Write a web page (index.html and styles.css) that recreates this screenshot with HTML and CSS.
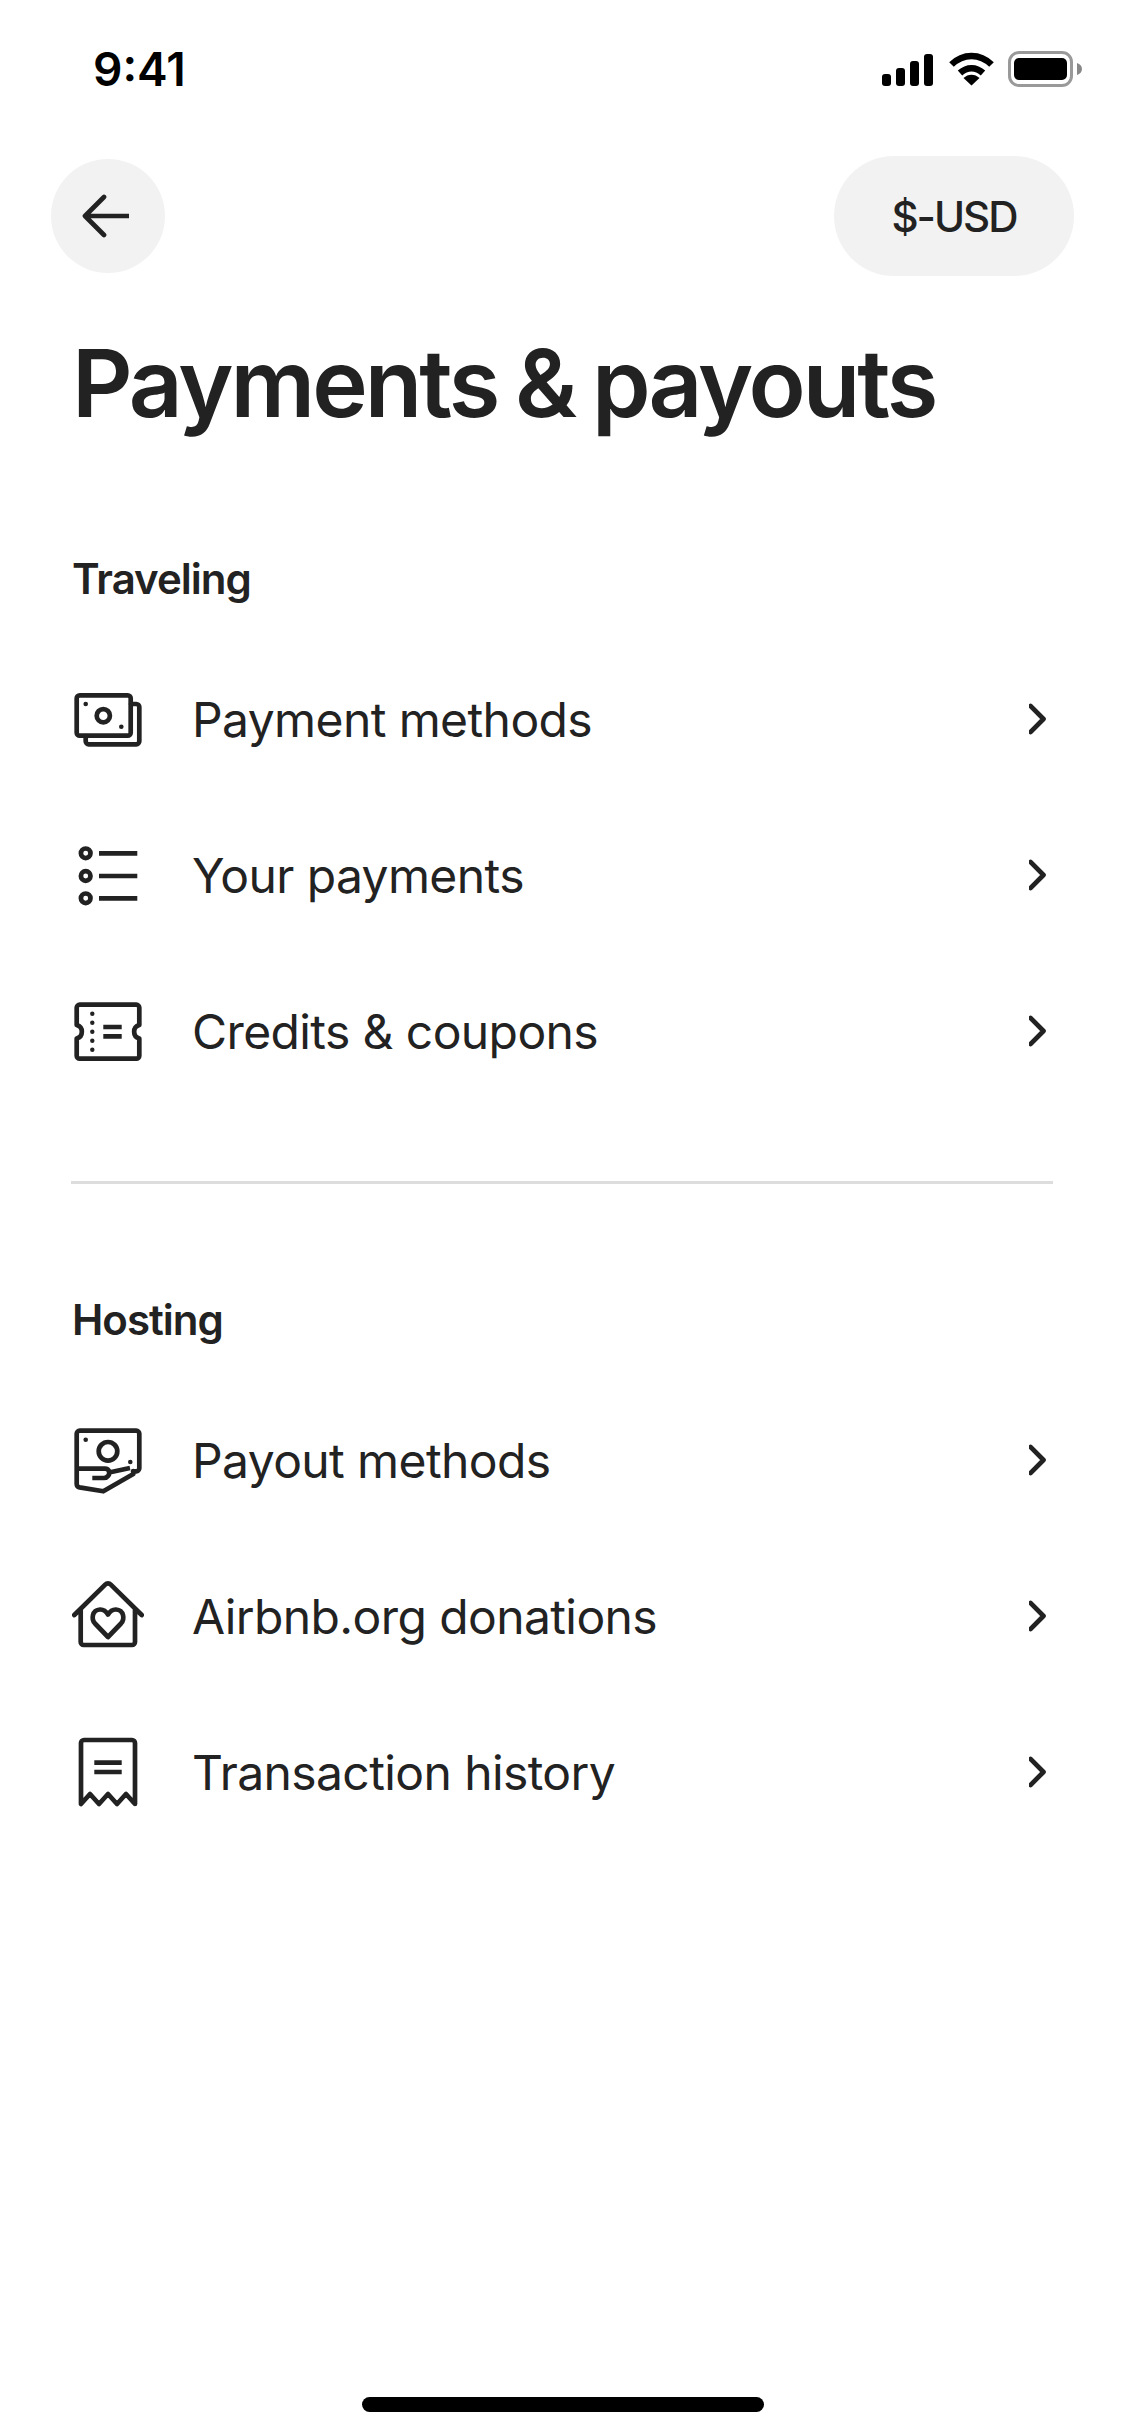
FILE: index.html
```html
<!DOCTYPE html>
<html lang="en">
<head>
    <meta charset="UTF-8">
    <meta name="viewport" content="width=device-width, initial-scale=1.0">
    <title>Payments &amp; payouts</title>
    <link rel="stylesheet" href="styles.css">
</head>
<body>
    <div class="page">
        <!-- Status bar -->
        <div class="status-bar">
            <span class="time">9:41</span>
            <div class="status-icons">
                <svg class="signal" width="55" height="33" viewBox="0 0 55 33"><rect x="2" y="21" width="9" height="12" rx="3"/><rect x="16" y="15" width="9" height="18" rx="3"/><rect x="30" y="8" width="9" height="25" rx="3"/><rect x="44" y="1" width="9" height="32" rx="3"/></svg>
                <svg class="wifi" width="45" height="34" viewBox="0 0 45 34"><path d="M2.5 12.5C14 1 31 1 42.5 12.5" class="wifi-arc"/><path d="M11 21C18 14.5 27 14.5 34 21" class="wifi-arc"/><path d="M22.5 33.5L14.5 26C19 21.5 26 21.5 30.5 26Z"/></svg>
                <svg class="battery" width="74" height="36" viewBox="0 0 74 36"><rect x="1.5" y="1.5" width="62" height="33" rx="9.5" fill="none" stroke="#999" stroke-width="3"/><rect x="6" y="7" width="53" height="22" rx="5"/><path d="M69 12c3 1 5 3 5 6s-2 5-5 6z" fill="#888"/></svg>
            </div>
        </div>

        <!-- Top buttons -->
        <div class="top-bar">
            <button class="back-button">
                <svg width="48" height="44" viewBox="0 0 48 44"><path d="M23 3L4 22L23 41M5 22H47" class="line"/></svg>
            </button>
            <button class="currency-button">$-USD</button>
        </div>

        <h1 class="title">Payments &amp; payouts</h1>

        <!-- Traveling -->
        <div class="section">
            <h3 class="section-title">Traveling</h3>
            <div class="row">
                <svg class="row-icon" viewBox="0 0 72 72"><rect x="4.7" y="12.3" width="54" height="40.4" rx="3" class="line"/><path d="M59 21h5.3a3 3 0 0 1 3 3v34.3a3 3 0 0 1-3 3H16.7a3 3 0 0 1-3-3V53" class="line"/><circle cx="31.3" cy="32.7" r="6.6" class="line"/><circle cx="13.7" cy="21" r="2.3"/><circle cx="49.3" cy="43.7" r="2.3"/></svg>
                <span class="row-label">Payment methods</span>
                <svg class="chevron" viewBox="0 0 24 36"><path d="M1.5 5L14.5 18L1.5 31" class="line"/></svg>
            </div>
            <div class="row">
                <svg class="row-icon" viewBox="0 0 72 72"><circle cx="13.7" cy="14.3" r="4.8" class="line"/><circle cx="13.7" cy="37" r="4.8" class="line"/><circle cx="13.7" cy="59.3" r="4.8" class="line"/><path d="M27 14.3H65.3M27 37H65.3M27 59.3H65.3" class="line butt"/></svg>
                <span class="row-label">Your payments</span>
                <svg class="chevron" viewBox="0 0 24 36"><path d="M1.5 5L14.5 18L1.5 31" class="line"/></svg>
            </div>
            <div class="row">
                <svg class="row-icon" viewBox="0 0 72 72"><path d="M7.7 9.7H64.3a3 3 0 0 1 3 3V30a7 7 0 0 0 0 13.5V60.7a3 3 0 0 1-3 3H7.7a3 3 0 0 1-3-3V43.5a7 7 0 0 0 0-13.5V12.7a3 3 0 0 1 3-3Z" class="line"/><circle cx="20.3" cy="18.7" r="2.2"/><circle cx="20.3" cy="27.7" r="2.2"/><circle cx="20.3" cy="36.7" r="2.2"/><circle cx="20.3" cy="45.7" r="2.2"/><circle cx="20.3" cy="54.7" r="2.2"/><path d="M31.3 32H49.7M31.3 41.3H49.7" class="line butt"/></svg>
                <span class="row-label">Credits &amp; coupons</span>
                <svg class="chevron" viewBox="0 0 24 36"><path d="M1.5 5L14.5 18L1.5 31" class="line"/></svg>
            </div>
        </div>

        <hr class="divider">

        <!-- Hosting -->
        <div class="section">
            <h3 class="section-title">Hosting</h3>
            <div class="row">
                <svg class="row-icon" viewBox="0 0 72 72"><path d="M61 47.3H64.3a3 3 0 0 0 3-3V9.7a3 3 0 0 0-3-3H7.7a3 3 0 0 0-3 3V60a3.5 3.5 0 0 0 2.8 3.4L31.3 67.3L61.3 50V47" class="line"/><path d="M5 44.7H33C37 44.7 38.5 49 36 52C35 53.3 33.5 54 32 54H20.3M37 48.5L58 44" class="line butt"/><circle cx="36" cy="27.3" r="9.3" class="line"/><circle cx="13.7" cy="15.7" r="2.3"/><circle cx="58.3" cy="38" r="2.3"/></svg>
                <span class="row-label">Payout methods</span>
                <svg class="chevron" viewBox="0 0 24 36"><path d="M1.5 5L14.5 18L1.5 31" class="line"/></svg>
            </div>
            <div class="row">
                <svg class="row-icon" viewBox="0 0 72 72"><path d="M2.3 35L33.2 4.6a4 4 0 0 1 5.6 0L69.7 35M8.7 29.7V62a3 3 0 0 0 3 3H60a3 3 0 0 0 3-3V29.7" class="line"/><path d="M36 57L23 43.5C19 39 20 30 28 29.5C32 29.3 34.5 32 36 34.5C37.5 32 40 29.3 44 29.5C52 30 53 39 49 43.5Z" class="line"/></svg>
                <span class="row-label">Airbnb.org donations</span>
                <svg class="chevron" viewBox="0 0 24 36"><path d="M1.5 5L14.5 18L1.5 31" class="line"/></svg>
            </div>
            <div class="row">
                <svg class="row-icon" viewBox="0 0 72 72"><path d="M9 68V7a3 3 0 0 1 3-3H60a3 3 0 0 1 3 3V68L54 58L45 68L36 58L27 68L18 58Z" class="line"/><path d="M22.3 26.7H49.7M22.3 36H49.7" class="line butt"/></svg>
                <span class="row-label">Transaction history</span>
                <svg class="chevron" viewBox="0 0 24 36"><path d="M1.5 5L14.5 18L1.5 31" class="line"/></svg>
            </div>
        </div>

        <div class="home-indicator"></div>
    </div>
</body>
</html>
```

FILE: styles.css
```css
/* Basic Reset */
body, h1, h3, hr, button {
    margin: 0;
    padding: 0;
    font-family: 'Inter', 'Liberation Sans', sans-serif;
}

body {
    background: #fff;
    color: #222;
}

.page {
    width: 1125px;
    height: 2436px;
    display: flex;
    flex-direction: column;
    overflow: hidden;
}

/* Status bar */
.status-bar {
    height: 52px;
    margin-top: 43px;
    padding: 0 43px 0 93px;
    display: flex;
    justify-content: space-between;
    align-items: center;
}

.time {
    font-size: 46px;
    font-weight: 600;
    color: #000;
}

.status-icons {
    display: flex;
    align-items: center;
    gap: 14px;
}

.status-icons svg {
    fill: #000;
    display: block;
}

.wifi-arc {
    fill: none;
    stroke: #000;
    stroke-width: 6.5;
}

/* Top buttons */
.top-bar {
    margin-top: 61px;
    padding: 0 51px;
    display: flex;
    justify-content: space-between;
    align-items: center;
}

.back-button {
    width: 114px;
    height: 114px;
    padding-right: 6px;
    border: none;
    border-radius: 50%;
    background: #f2f2f2;
    display: flex;
    justify-content: center;
    align-items: center;
}

.currency-button {
    width: 240px;
    height: 120px;
    border: none;
    border-radius: 60px;
    background: #f2f2f2;
    color: #222;
    font-size: 42px;
    font-weight: 500;
    letter-spacing: -2px;
}

.title {
    margin-top: 51px;
    margin-bottom: 4px;
    padding-left: 72px;
    font-size: 94px;
    line-height: 112px;
    font-weight: 600;
    letter-spacing: -3px;
    word-spacing: -3px;
}

/* Sections */
.section {
    padding: 0 72px;
}

.section-title {
    margin-top: 110px;
    margin-bottom: 36px;
    font-size: 42px;
    line-height: 52px;
    font-weight: 600;
    letter-spacing: -1px;
}

.row {
    height: 156px;
    display: flex;
    align-items: center;
}

.row-icon {
    width: 72px;
    height: 72px;
    fill: #222;
    flex-shrink: 0;
}

.row-label {
    margin-left: 48px;
    flex: 1;
    font-size: 48px;
    font-weight: 400;
    letter-spacing: -0.6px;
}

.chevron {
    width: 24px;
    height: 36px;
    flex-shrink: 0;
}

.line {
    fill: none;
    stroke: #222;
    stroke-width: 4.7;
    stroke-linecap: round;
    stroke-linejoin: round;
}

.butt {
    stroke-linecap: butt;
}

.divider {
    margin: 72px 72px 0 71px;
    border: none;
    border-top: 3px solid #ddd;
}

.home-indicator {
    width: 402px;
    height: 15px;
    margin: auto auto 24px;
    border-radius: 8px;
    background: #000;
}
```
